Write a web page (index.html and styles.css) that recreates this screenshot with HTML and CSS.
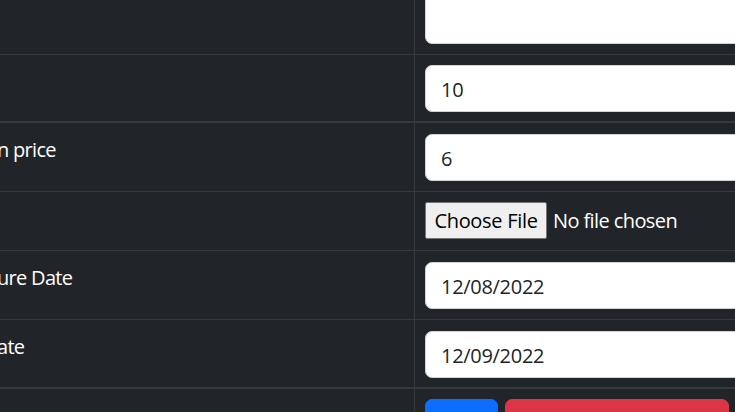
FILE: index.html
```html
<!DOCTYPE html>
<html lang="en">
<head>
<meta charset="utf-8">
<title>Edit product</title>
<link rel="stylesheet" href="styles.css">
</head>
<body>
<div class="viewport">
  <div class="table">
    <div class="row row-a">
      <div class="label"></div>
      <div class="field"><textarea class="control area"></textarea></div>
    </div>
    <div class="row row-b">
      <div class="label"></div>
      <div class="field"><input class="control" type="text" value="10"></div>
    </div>
    <div class="row row-c">
      <div class="label">n price</div>
      <div class="field"><input class="control" type="text" value="6"></div>
    </div>
    <div class="row row-d">
      <div class="label"></div>
      <div class="field"><input class="file" type="file"></div>
    </div>
    <div class="row row-e">
      <div class="label">ure Date</div>
      <div class="field"><input class="control" type="text" value="12/08/2022"></div>
    </div>
    <div class="row row-f">
      <div class="label">ate</div>
      <div class="field"><input class="control" type="text" value="12/09/2022"></div>
    </div>
    <div class="row row-g">
      <div class="label"></div>
      <div class="field actions">
        <button class="btn btn-primary" type="button">Save</button>
        <button class="btn btn-danger" type="button">Back to List</button>
      </div>
    </div>
  </div>
</div>
</body>
</html>
```
FILE: styles.css
```css
html, body {
  margin: 0;
  padding: 0;
  background: #212529;
}
body {
  font-family: "Open Sans", "Noto Sans", sans-serif;
  font-size: 20px;
  line-height: 30px;
  color: #fff;
}
.viewport {
  width: 735px;
  height: 412px;
  overflow: hidden;
}
.table {
  width: 1100px;
  margin-top: -56px;
}
.row {
  display: grid;
  grid-template-columns: 414px 1fr;
  border-bottom: 1px solid #373b3e;
}
.label {
  padding: 12px 0 0 0;
  text-indent: -3px;
  white-space: nowrap;
  letter-spacing: -0.7px;
}
.field {
  border-left: 1px solid #373b3e;
  padding: 10px 10px 10px 10px;
}
.control {
  display: block;
  box-sizing: border-box;
  width: 640px;
  height: 47px;
  margin: 0;
  padding: 8px 15px 6px 15px;
  border: 1px solid #ced4da;
  border-radius: 7px;
  background: #fff;
  color: #212529;
  font-family: "Open Sans", "Noto Sans", sans-serif;
  font-size: 20px;
  line-height: 30px;
  letter-spacing: -0.3px;
  outline: none;
}
.area {
  height: 90px;
  resize: none;
}
.row-b { border-bottom-width: 2px; }
.row-b .field { padding-bottom: 9px; }
.row-c .field { padding-top: 11px; }
.row-d .field { padding-bottom: 11px; }
.row-e .field { padding-top: 11px; }
.row-f { border-bottom-width: 2px; }
.row-f .field { padding-top: 11px; padding-bottom: 9px; }
.file {
  display: block;
  height: 37px;
  margin: 0;
  padding: 0;
  color: #fff;
  font-family: "Open Sans", "Noto Sans", sans-serif;
  font-size: 20px;
  line-height: 37px;
  letter-spacing: -0.6px;
}
.file::file-selector-button {
  box-sizing: border-box;
  width: 122px;
  height: 37px;
  margin: 0 6px 0 0;
  padding: 0 4px;
  border: 1px solid #767676;
  border-radius: 2px;
  background: #efefef;
  color: #000;
  font-family: "Open Sans", "Noto Sans", sans-serif;
  font-size: 20px;
  letter-spacing: -0.3px;
}
.actions {
  display: flex;
  gap: 7px;
}
.btn {
  box-sizing: border-box;
  height: 47px;
  padding: 7px 15px;
  border: 1px solid transparent;
  border-radius: 7px;
  color: #fff;
  font-family: "Open Sans", "Noto Sans", sans-serif;
  font-size: 20px;
  line-height: 30px;
}
.btn-primary {
  width: 73px;
  background: #0d6efd;
  border-color: #0d6efd;
}
.btn-danger {
  width: 224px;
  background: #dc3545;
  border-color: #dc3545;
}
```
